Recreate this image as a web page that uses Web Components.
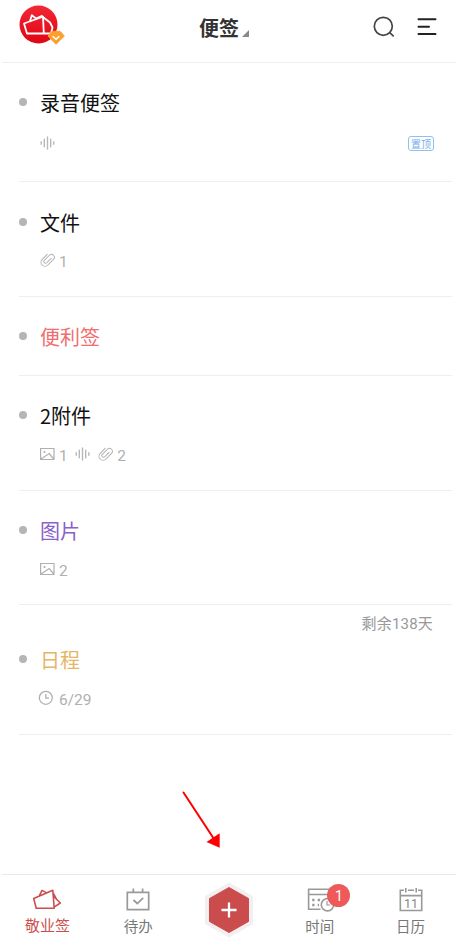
<!DOCTYPE html>
<html lang="zh-CN">
<head>
<meta charset="UTF-8">
<title>便签</title>
<style>
    body {
        margin: 0;
        background: #fff;
        font-family: "Noto Sans CJK SC", sans-serif;
    }
</style>
</head>
<body>
<notes-app>
    <app-header slot="header">便签</app-header>
    <note-item style="--height: 118px; --meta-gap: 16px" pinned="置顶">录音便签
        <meta-icon slot="meta" name="voice"></meta-icon>
    </note-item>
    <note-item style="--height: 114px; --top: 25px; --meta-gap: 13px">文件
        <meta-icon slot="meta" name="clip">1</meta-icon>
    </note-item>
    <note-item style="--height: 78px; --color: #f26d6d">便利签</note-item>
    <note-item style="--height: 114px">2附件
        <meta-icon slot="meta" name="image">1</meta-icon>
        <meta-icon slot="meta" name="voice"></meta-icon>
        <meta-icon slot="meta" name="clip">2</meta-icon>
    </note-item>
    <note-item style="--height: 113px; --color: #8a60ca">图片
        <meta-icon slot="meta" name="image">2</meta-icon>
    </note-item>
    <note-item style="--height: 129px; --top: 3px; --color: #e3b765" remain="剩余138天">日程
        <meta-icon slot="meta" name="clock">6/29</meta-icon>
    </note-item>
    <hint-arrow slot="hint"></hint-arrow>
    <tab-bar slot="footer">
        <tab-item icon="notes" active>敬业签</tab-item>
        <tab-item icon="todo">待办</tab-item>
        <add-button></add-button>
        <tab-item icon="time" badge="1">时间</tab-item>
        <tab-item icon="calendar">日历</tab-item>
    </tab-bar>
</notes-app>

<script>
const META_ICONS = {
    voice: `<svg width="16" height="16" viewBox="0 0 16 16" fill="none" stroke="#b8b8b8" stroke-width="1.4" stroke-linecap="round">
        <path d="M1.200 6.800v2.400M4.300 4.200v7.600M7.500 2v12M10.700 4.200v7.600M13.800 6.800v2.400"/></svg>`,
    clip: `<svg width="16" height="16" viewBox="0 0 16 16" fill="none" stroke="#b0b0b0" stroke-width="1" stroke-linecap="round">
        <path transform="rotate(-45 7.500 7.700)" d="M11 3.700H4a4 4 0 0 0 0 8H12a2.900 2.900 0 0 0 0-5.800H4.800a1.700 1.700 0 0 0 0 3.400H11"/></svg>`,
    image: `<svg width="16" height="16" viewBox="0 0 16 16" fill="none" stroke="#b0b0b0" stroke-width="1.200">
        <path d="M.6 2.500h13.400v11H.6zM1 13L9.200 7.500L13.700 13"/><circle cx="4.500" cy="6" r=".5"/></svg>`,
    clock: `<svg width="16" height="16" viewBox="0 0 16 16" fill="none" stroke="#b0b0b0" stroke-width="1.300" overflow="visible">
        <circle cx="5.800" cy="7.800" r="6.500"/><path d="M5.800 4v4.200H9"/></svg>`
};

const TAB_ICONS = {
    notes: `<svg width="30" height="24" viewBox="0 0 30 24" fill="none" stroke="#cb4e4e" stroke-width="1.600" stroke-linejoin="round">
        <path d="M1.700 10.500L20.800 2.300L22.200 20.200H4.200zM7.200 8L10 2.400L14.300 4.600M21.500 8.300L28.300 15L22.500 18.800M21 4.600L24.600 11.300"/></svg>`,
    todo: `<svg width="30" height="24" viewBox="0 0 30 24" fill="none" stroke="#999" stroke-width="1.700">
        <path d="M4.300 4.300h21.400v17.400H4.300zM10.300 .5v4M19.600 .5v4M10.500 12L14.300 15.500L20.200 9.800"/></svg>`,
    time: `<svg width="30" height="24" viewBox="0 0 30 24" fill="none" stroke="#999" stroke-width="1.600">
        <path d="M15.500 21.300H3.600V1.200H25V11M3.600 6.500H25"/>
        <path d="M7.200 12h2.300M12.700 12H15M7.200 17h2.300M12.700 17H14" stroke-width="2.300"/>
        <circle cx="22.500" cy="16.700" r="6.200"/><path d="M22 13v4H25.300" stroke-width="1.200"/></svg>`,
    calendar: `<svg width="30" height="24" viewBox="0 0 30 24" fill="none" stroke="#999" stroke-width="1.600">
        <path d="M8 2.200H4.300V22.500H25.700V2.200H22M12 2.200h6M4.300 7.600H25.700M9.800 0v4.500M20.200 0v4.500"/>
        <text x="15" y="19.500" font-family="Roboto, sans-serif" font-size="12.500" text-anchor="middle" fill="#888" stroke="none">11</text></svg>`
};

class NotesApp extends HTMLElement {
    connectedCallback() {
        this.attachShadow({ mode: 'open' });
        this.shadowRoot.innerHTML = `
            <style>
                :host {
                    display: flex;
                    flex-direction: column;
                    position: relative;
                    height: 945px;
                    overflow: hidden;
                    background: #fff;
                }
                main {
                    flex: 1;
                    min-height: 0;
                    padding: 0 4px 0 19px;
                }
            </style>
            <slot name="header"></slot>
            <main><slot></slot></main>
            <slot name="hint"></slot>
            <slot name="footer"></slot>
        `;
    }
}

class AppHeader extends HTMLElement {
    connectedCallback() {
        this.attachShadow({ mode: 'open' });
        this.shadowRoot.innerHTML = `
            <style>
                :host {
                    display: grid;
                    grid-template-columns: 1fr auto 1fr;
                    height: 62px;
                    margin-left: 2px;
                    border-bottom: 1px solid #eee;
                }
                .logo { margin: 5px 0 0 17px; }
                h1 {
                    display: flex;
                    align-items: flex-end;
                    gap: 3px;
                    height: 38px;
                    margin: 0 10px 0 0;
                    font-size: 20px;
                    line-height: 21px;
                    font-weight: 700;
                    color: #333;
                }
                h1 svg { margin-bottom: 1px; }
                .actions {
                    display: flex;
                    justify-content: flex-end;
                    gap: 22px;
                    padding: 15px 19px 0 0;
                }
                svg { display: block; }
            </style>
            <svg class="logo" width="46" height="42" viewBox="0 0 46 42">
                <defs>
                    <linearGradient id="red" x1="0" y1="0" x2="0" y2="1">
                        <stop offset="0" stop-color="#f32735"/>
                        <stop offset="1" stop-color="#df0615"/>
                    </linearGradient>
                </defs>
                <circle cx="19.500" cy="19.500" r="19" fill="url(#red)"/>
                <path d="M5 18.500L24 11.600L24.800 28.500H8zM11 16L12.800 10.200L17 13.500M17.500 13.200L23.600 10.500M25 28.500H32L33.500 22.500L31 17.500L24.500 12.500" fill="none" stroke="#fff" stroke-width="1.800" stroke-linejoin="round"/>
                <path d="M33 26.300H41L45.300 31L37 39.300L29 31z" fill="#fba02c" stroke="#fba02c" stroke-linejoin="round"/>
                <path d="M33.700 31.300L37 34.200L40.300 31.300" fill="none" stroke="#fff" stroke-width="1.500"/>
            </svg>
            <h1><slot></slot><svg width="7" height="7"><path d="M7 0V7H0z" fill="#888"/></svg></h1>
            <div class="actions">
                <svg width="22" height="23" viewBox="0 0 22 23" fill="none" stroke="#444" stroke-width="1.700">
                    <circle cx="10.300" cy="11.300" r="9"/><path d="M16.700 17.700L20.700 21.300"/>
                </svg>
                <svg width="20" height="23" viewBox="0 0 20 23" fill="none" stroke="#222" stroke-width="2" stroke-linecap="round">
                    <path d="M1.500 4.300H18.500M1.500 11.700H12M1.500 19H18.500"/>
                </svg>
            </div>
        `;
    }
}

class NoteItem extends HTMLElement {
    connectedCallback() {
        const pinned = this.getAttribute('pinned');
        const remain = this.getAttribute('remain');
        this.attachShadow({ mode: 'open' });
        this.shadowRoot.innerHTML = `
            <style>
                :host {
                    display: block;
                    height: var(--height);
                    border-bottom: 1px solid #eee;
                }
                .remain {
                    padding: 8px 19px 0 0;
                    height: 28px;
                    line-height: 23px;
                    text-align: right;
                    font-family: Roboto, "Noto Sans CJK SC", sans-serif;
                    font-size: 15px;
                    letter-spacing: .2px;
                    color: #999;
                }
                .title {
                    display: flex;
                    align-items: center;
                    gap: 13px;
                    padding-top: var(--top, 24px);
                    height: 30px;
                    font-size: 20px;
                    color: var(--color, #111);
                }
                .title span {
                    padding-top: 2px;
                    line-height: 30px;
                }
                .title::before {
                    content: '';
                    width: 8px;
                    height: 8px;
                    border-radius: 50%;
                    background: #b5b5b5;
                }
                .meta {
                    display: flex;
                    align-items: center;
                    gap: 7px;
                    height: 20px;
                    margin: var(--meta-gap, 14px) 18px 0 20.500px;
                }
                .pin {
                    margin-left: auto;
                    box-sizing: border-box;
                    width: 26px;
                    height: 15px;
                    border: 1px solid #8fc0ee;
                    border-radius: 3px;
                    line-height: 13px;
                    text-align: center;
                    font-size: 10px;
                    color: #6faeea;
                }
            </style>
            ${remain ? `<div class="remain">${remain}</div>` : ''}
            <div class="title"><span><slot></slot></span></div>
            <div class="meta">
                <slot name="meta"></slot>
                ${pinned ? `<span class="pin">${pinned}</span>` : ''}
            </div>
        `;
    }
}

class MetaIcon extends HTMLElement {
    connectedCallback() {
        this.attachShadow({ mode: 'open' });
        this.shadowRoot.innerHTML = `
            <style>
                :host {
                    display: flex;
                    align-items: center;
                    gap: 3.500px;
                    line-height: 20px;
                    font-family: Roboto, sans-serif;
                    font-size: 15.500px;
                    color: #b0b0b0;
                }
                svg { display: block; flex: none; }
                span { padding-top: 3px; }
            </style>
            ${META_ICONS[this.getAttribute('name')]}
            ${this.textContent ? '<span><slot></slot></span>' : ''}
        `;
    }
}

class HintArrow extends HTMLElement {
    connectedCallback() {
        this.attachShadow({ mode: 'open' });
        this.shadowRoot.innerHTML = `
            <style>
                :host {
                    position: absolute;
                    left: 180px;
                    top: 790px;
                }
                svg { display: block; }
            </style>
            <svg width="42" height="60" viewBox="0 0 42 60">
                <path d="M3.500 2.500L34 49" stroke="#f00" stroke-width="2" stroke-linecap="round"/>
                <path d="M39.700 43.300V57.700L26.500 52z" fill="#f00"/>
            </svg>
        `;
    }
}

class TabBar extends HTMLElement {
    connectedCallback() {
        this.attachShadow({ mode: 'open' });
        this.shadowRoot.innerHTML = `
            <style>
                :host {
                    display: grid;
                    grid-template-columns: repeat(5, 1fr);
                    height: 70px;
                    margin-left: 2px;
                    border-top: 1px solid #e8e8e8;
                }
            </style>
            <slot></slot>
        `;
    }
}

class TabItem extends HTMLElement {
    connectedCallback() {
        const badge = this.getAttribute('badge');
        this.attachShadow({ mode: 'open' });
        this.shadowRoot.innerHTML = `
            <style>
                :host {
                    display: flex;
                    flex-direction: column;
                    align-items: center;
                    position: relative;
                    padding-top: 13px;
                    font-size: 14.500px;
                    line-height: 20px;
                    color: #777;
                }
                :host([active]) {
                    color: #cb4e4e;
                    font-size: 15px;
                }
                svg { display: block; }
                .label { margin-top: 4px; }
                :host([active]) .label { margin-top: 3px; }
                .badge {
                    position: absolute;
                    left: 53px;
                    top: 9px;
                    width: 23px;
                    height: 23px;
                    border-radius: 50%;
                    background: #ee5a5a;
                    line-height: 24px;
                    text-align: center;
                    font-family: Roboto, sans-serif;
                    font-size: 14px;
                    color: #fff;
                }
            </style>
            ${TAB_ICONS[this.getAttribute('icon')]}
            <span class="label"><slot></slot></span>
            ${badge ? `<span class="badge">${badge}</span>` : ''}
        `;
    }
}

class AddButton extends HTMLElement {
    connectedCallback() {
        this.attachShadow({ mode: 'open' });
        this.shadowRoot.innerHTML = `
            <style>
                :host {
                    display: flex;
                    justify-content: center;
                    padding-top: 7px;
                }
                svg { display: block; }
            </style>
            <svg width="50" height="56" viewBox="0 0 50 56">
                <path d="M25 1.500L48 14.500V41.500L25 54.500L2 41.500V14.500z" fill="#f3eeef" stroke="#f3eeef" stroke-width="2" stroke-linejoin="round"/>
                <path d="M25 5.500L44.500 16.500V39.500L25 50.500L5.500 39.500V16.500z" fill="#cb4c4c" stroke="#cb4c4c" stroke-linejoin="round"/>
                <path d="M17.500 28H32.500M25 20.500V35.500" stroke="#fff" stroke-width="2.300"/>
            </svg>
        `;
    }
}

customElements.define('notes-app', NotesApp);
customElements.define('app-header', AppHeader);
customElements.define('note-item', NoteItem);
customElements.define('meta-icon', MetaIcon);
customElements.define('hint-arrow', HintArrow);
customElements.define('tab-bar', TabBar);
customElements.define('tab-item', TabItem);
customElements.define('add-button', AddButton);
</script>
</body>
</html>
